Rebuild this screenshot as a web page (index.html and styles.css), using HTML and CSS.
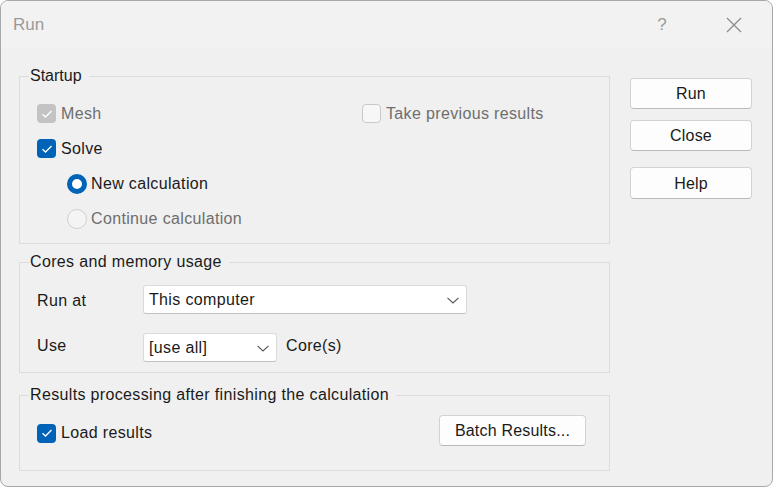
FILE: index.html
```html
<!DOCTYPE html>
<html>
<head>
<meta charset="utf-8">
<title>Run</title>
<link rel="stylesheet" href="styles.css">
</head>
<body>
<div class="window">
  <div class="titlebar">
    <div class="title">Run</div>
    <div class="tb-btn tb-help">?</div>
    <div class="tb-btn tb-close">
      <svg width="16" height="16" viewBox="0 0 16 16"><path d="M1 1 L15 15 M15 1 L1 15" stroke="#8a8a8a" stroke-width="1.2" fill="none"/></svg>
    </div>
  </div>
  <div class="main">
    <div class="left">
      <fieldset class="group group-startup">
        <legend>Startup</legend>
        <div class="group-body startup-body">
          <div class="row">
            <label class="check disabled mesh">
              <span class="box checked grey"><svg width="12" height="10" viewBox="0 0 12 10"><path d="M1.5 5.2 L4.5 8 L10.5 2" stroke="#fff" stroke-width="1.3" fill="none"/></svg></span>
              <span>Mesh</span>
            </label>
            <label class="check disabled">
              <span class="box empty-disabled"></span>
              <span>Take previous results</span>
            </label>
          </div>
          <div class="row">
            <label class="check">
              <span class="box checked"><svg width="12" height="10" viewBox="0 0 12 10"><path d="M1.5 5.2 L4.5 8 L10.5 2" stroke="#fff" stroke-width="1.3" fill="none"/></svg></span>
              <span>Solve</span>
            </label>
          </div>
          <div class="row indent">
            <label class="radio">
              <span class="dot on"></span>
              <span>New calculation</span>
            </label>
          </div>
          <div class="row indent">
            <label class="radio disabled">
              <span class="dot off"></span>
              <span>Continue calculation</span>
            </label>
          </div>
        </div>
      </fieldset>

      <fieldset class="group group-cores">
        <legend>Cores and memory usage</legend>
        <div class="group-body cores-body">
          <div class="form-row">
            <span class="flabel runat">Run at</span>
            <div class="select wide">
              <span>This computer</span>
              <svg width="12" height="7" viewBox="0 0 12 7"><path d="M0.5 0.8 L6 6 L11.5 0.8" stroke="#555" stroke-width="1.1" fill="none"/></svg>
            </div>
          </div>
          <div class="form-row">
            <span class="flabel use">Use</span>
            <div class="select narrow">
              <span>[use all]</span>
              <svg width="12" height="7" viewBox="0 0 12 7"><path d="M0.5 0.8 L6 6 L11.5 0.8" stroke="#555" stroke-width="1.1" fill="none"/></svg>
            </div>
            <span class="suffix">Core(s)</span>
          </div>
        </div>
      </fieldset>

      <fieldset class="group group-results">
        <legend>Results processing after finishing the calculation</legend>
        <div class="group-body results-body">
          <label class="check load">
            <span class="box checked"><svg width="12" height="10" viewBox="0 0 12 10"><path d="M1.5 5.2 L4.5 8 L10.5 2" stroke="#fff" stroke-width="1.3" fill="none"/></svg></span>
            <span>Load results</span>
          </label>
          <button class="btn batch">Batch Results...</button>
        </div>
      </fieldset>
    </div>
    <div class="right">
      <button class="btn side run">Run</button>
      <button class="btn side close">Close</button>
      <button class="btn side help">Help</button>
    </div>
  </div>
</div>
</body>
</html>
```

FILE: styles.css
```css
* { box-sizing: border-box; }
html, body { margin: 0; padding: 0; background: #ffffff; }
body { width: 773px; height: 487px; overflow: hidden; }

.window {
  width: 773px;
  height: 487px;
  border: 1px solid #a8a8a8;
  border-radius: 8px;
  background: #f0f0f0;
  font-family: "Liberation Sans", Arial, sans-serif;
  font-size: 16px;
  letter-spacing: 0.35px;
  color: #1a1a1a;
  overflow: hidden;
}

.titlebar {
  height: 47px;
  display: flex;
  align-items: center;
  padding-left: 12px;
  padding-right: 15px;
  background: #f2f2f2;
  letter-spacing: 0;
}
.title { flex: 1; font-size: 17px; color: #9a9a9a; margin-top: 1px; }
.tb-btn { width: 46px; height: 32px; display: flex; align-items: center; justify-content: center; }
.tb-help { font-size: 17px; color: #9a9a9a; margin-right: 27px; padding-left: 2px; }
.tb-close svg { display: block; }

.main {
  display: flex;
  padding-left: 18px;
  padding-top: 18px;
}
.left { width: 591px; display: flex; flex-direction: column; }
.right {
  width: 122px;
  margin-left: 20px;
  padding-top: 12px;
  display: flex;
  flex-direction: column;
}

.group {
  margin: 0;
  padding: 0;
  border: 1px solid #dcdcdc;
  min-width: 0;
}
.group legend {
  margin-left: 9px;
  padding: 0 7px 0 1px;
  line-height: 20px;
  font-size: 16px;
  color: #1a1a1a;
}
.group-startup legend { letter-spacing: 0; }
.group-cores { margin-top: 8px; }
.group-results { margin-top: 12px; }

.startup-body { padding: 10px 0 7px 17px; }
.row { height: 35px; display: flex; align-items: center; }
.row.indent { padding-left: 30px; }

.check, .radio { display: flex; align-items: center; }
.check .box {
  width: 19px; height: 19px;
  border-radius: 4px;
  margin-right: 5px;
  display: flex; align-items: center; justify-content: center;
}
.box.checked { background: #0063b8; }
.box.checked.grey { background: #c3c3c3; }
.box.empty-disabled { border: 1px solid #c8c8c8; background: #f7f7f7; }
.disabled { color: #6e6e6e; }
.mesh { width: 325px; }

.radio .dot {
  width: 20px; height: 20px;
  border-radius: 50%;
  margin-right: 4px;
}
.dot.on { background: #ffffff; border: 5.5px solid #0063b8; }
.dot.off { border: 1px solid #cfcfcf; background: #f4f4f4; }

.cores-body { padding: 13px 0 10px 17px; display: flex; flex-direction: column; gap: 19px; }
.form-row { display: flex; align-items: center; height: 29px; }
.flabel { width: 106px; }
.flabel.runat { margin-top: 3px; }
.flabel.use { margin-top: -4px; }
.select {
  height: 29px;
  background: #ffffff;
  border: 1px solid #dadada;
  border-bottom-color: #c2c2c2;
  border-radius: 3px;
  display: flex;
  align-items: center;
  justify-content: space-between;
  padding: 0 7px 0 5px;
}
.select svg { display: block; margin-top: 1px; }
.select.wide { width: 324px; }
.select.narrow { width: 134px; }
.suffix { margin-left: 9px; margin-top: -4px; }

.results-body {
  padding: 10px 23px 24px 17px;
  display: flex;
  align-items: center;
  justify-content: space-between;
}
.load { margin-top: 5px; }

.btn {
  font-family: "Liberation Sans", Arial, sans-serif;
  font-size: 16px;
  letter-spacing: 0.2px;
  color: #1a1a1a;
  background: #fdfdfd;
  border: 1px solid #d3d3d3;
  border-bottom-color: #bababa;
  border-radius: 4px;
  padding: 0;
}
.batch { width: 147px; height: 31px; }
.side { width: 122px; height: 31px; }
.side.run { margin-bottom: 11px; }
.side.close { margin-bottom: 16px; }
.side.help { height: 32px; padding-top: 2px; }
```
